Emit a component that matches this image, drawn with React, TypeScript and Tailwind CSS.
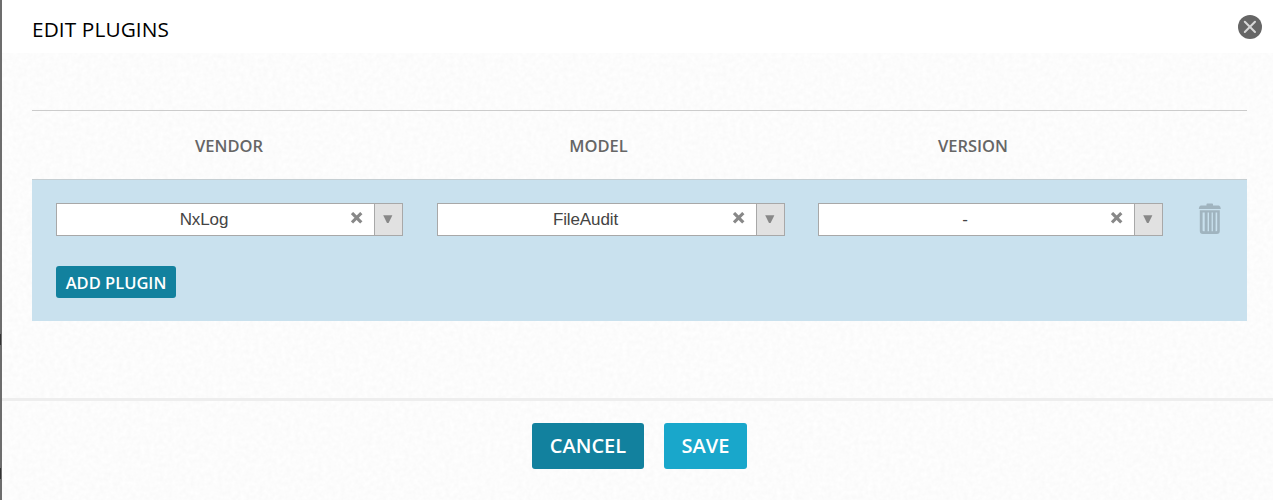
type SelectFieldProps = {
  label: string;
  value: string;
  className: string;
  valueClassName: string;
};

function SelectField({ label, value, className, valueClassName }: SelectFieldProps) {
  return (
    <div
      role="combobox"
      aria-label={label}
      aria-expanded={false}
      className={`flex h-[33px] shrink-0 border border-[#a8a8a8] bg-white ${className}`}
    >
      <span
        className={`text-center font-['Liberation_Sans',sans-serif] text-[17px] leading-[31px] tracking-[-0.1px] text-[#444] ${valueClassName}`}
      >
        {value}
      </span>
      <svg className="mt-[8px] ml-auto h-[12px] w-[12px] shrink-0" viewBox="0 0 12 12">
        <path d="M2.1 2.2 9.2 9.3M9.2 2.2 2.1 9.3" stroke="#888" strokeWidth="3.2" strokeLinecap="square" />
      </svg>
      <span className="ml-[11px] flex w-[28px] shrink-0 border-l border-[#a8a8a8] bg-[#e1e1e1]">
        <svg className="mt-[11px] ml-[8px] h-[9px] w-[10px]" viewBox="0 0 10 9">
          <path d="M0.2 0.3H9.4L5.6 8H4Z" fill="#888" />
        </svg>
      </span>
    </div>
  );
}

function TrashIcon() {
  return (
    <svg className="h-[32px] w-[24px]" viewBox="0 0 24 32">
      <g fill="#a0b4bf">
        <path d="M8.5 2.5V1.2Q8.5 0.4 9.3 0.4H14.2Q15 0.4 15 1.2V2.5H21Q22.8 3 22.8 6H0.8Q0.8 3 2.6 2.5Z" />
        <path
          fillRule="evenodd"
          d="M1.8 7.2H21.8V28Q21.8 31 18.8 31H4.8Q1.8 31 1.8 28ZM4.6 9.5V27.3Q4.6 28.2 5.6 28.2H6.7V9.5ZM9.6 9.5V28.2H11V9.5ZM13.6 9.5V28.2H14.9V9.5ZM17.6 9.5V28.2H18.2Q19.2 28.2 19.2 27.3V9.5Z"
        />
      </g>
    </svg>
  );
}

function PaperTexture() {
  return (
    <svg aria-hidden="true" className="pointer-events-none absolute inset-0 h-full w-full">
      <filter id="paper" x="0" y="0" width="100%" height="100%" colorInterpolationFilters="sRGB">
        <feTurbulence type="fractalNoise" baseFrequency="0.22" numOctaves="2" seed="4" />
        <feColorMatrix values="0 0 0 0 0  0 0 0 0 0  0 0 0 0 0  0.03 0 0 0 -0.003" />
      </filter>
      <rect width="100%" height="100%" filter="url(#paper)" />
    </svg>
  );
}

export default function App() {
  return (
    <div className="relative h-[500px] w-[1273px] overflow-hidden bg-white font-['Open_Sans',sans-serif]">
      <PaperTexture />
      <div className="relative flex h-full">
        <div className="flex w-[2px] shrink-0 flex-col bg-[#6d6d6d]">
          <span className="mt-[334px] h-[11px] w-px bg-[#333]" />
          <span className="mt-[123px] h-[11px] w-px bg-[#333]" />
        </div>
        <div className="flex min-w-0 flex-1 flex-col">
          <header className="flex h-[53px] shrink-0 justify-between bg-white pr-[11px] pl-[30px]">
            <h1 className="mt-[14px] text-[20.8px] leading-[30px] tracking-[0.1px] text-black">EDIT PLUGINS</h1>
            <button aria-label="Close" className="mt-[15px] h-[24px] w-[24px]">
              <svg width="24" height="24" viewBox="0 0 24 24">
                <circle cx="12" cy="12" r="12" fill="#666" />
                <path d="M6.8 6.8 17 17M17 6.8 6.8 17" stroke="#d8d8d8" strokeWidth="2" strokeLinecap="round" />
              </svg>
            </button>
          </header>

          <main className="h-[345px] shrink-0 pt-[57px] pr-[26px] pl-[30px]">
            <div className="flex h-[69px] border-t border-[#ccc] pt-[23px] text-center text-[16.5px] leading-[24px] font-semibold text-[#666]">
              <span className="w-[394px]">VENDOR</span>
              <span className="w-[345px]">MODEL</span>
              <span className="w-[404px]">VERSION</span>
            </div>
            <section className="h-[142px] border-t border-[#c5ced2] bg-[#c9e1ee] pt-[23px] pl-[24px]">
              <div className="flex">
                <SelectField label="Vendor" value="NxLog" className="w-[347px]" valueClassName="w-[295px]" />
                <SelectField label="Model" value="FileAudit" className="ml-[34px] w-[348px]" valueClassName="w-[296px]" />
                <SelectField label="Version" value="-" className="ml-[33px] w-[345px]" valueClassName="w-[293px]" />
                <button aria-label="Delete plugin" className="ml-[35px] h-[32px] w-[24px]">
                  <TrashIcon />
                </button>
              </div>
              <button className="mt-[30px] block h-[32px] w-[120px] rounded-[3px] bg-[#12819e] pt-[2px] text-[16.5px] leading-[30px] font-semibold text-white">
                ADD PLUGIN
              </button>
            </section>
          </main>

          <footer className="flex flex-1 items-start gap-[20px] border-t-[3px] border-[#eee] pt-[22px] pl-[530px] text-[20px] leading-[46px] font-semibold text-white">
            <button className="h-[46px] w-[112px] rounded-[3px] bg-[#12819e]">CANCEL</button>
            <button className="h-[46px] w-[83px] rounded-[3px] bg-[#19a7cb]">SAVE</button>
          </footer>
        </div>
      </div>
    </div>
  );
}
